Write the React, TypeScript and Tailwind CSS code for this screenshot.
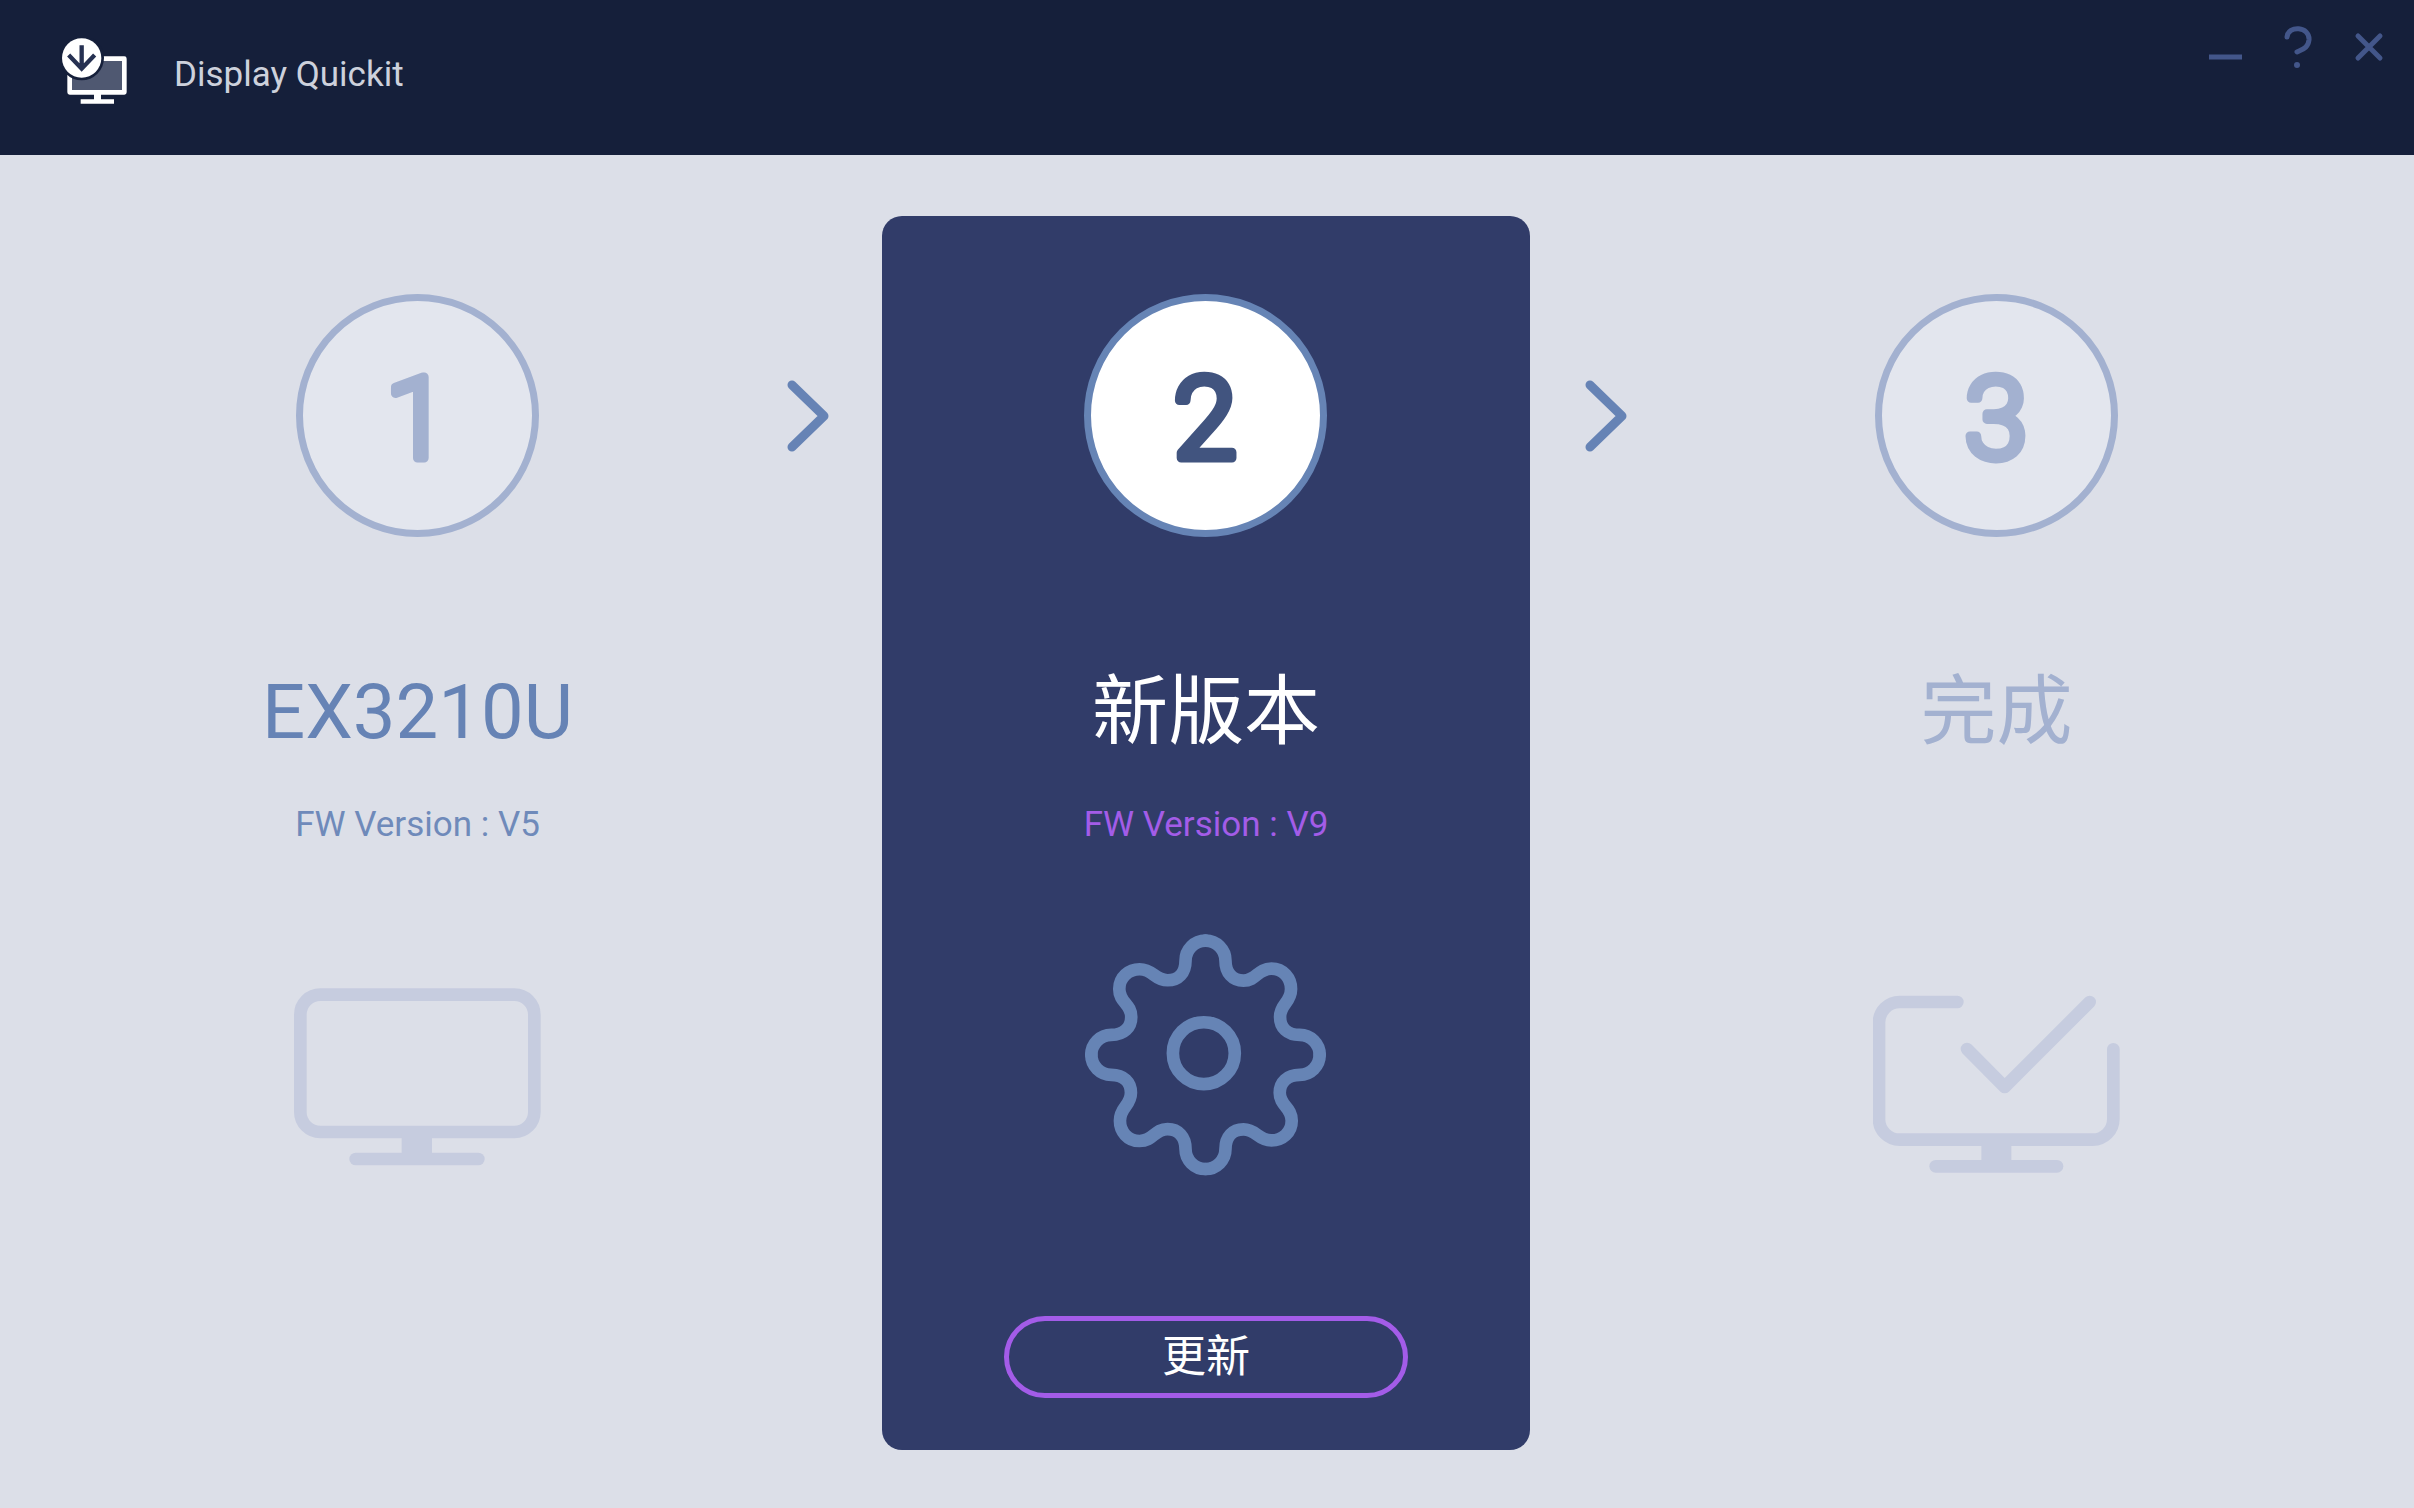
import type { ReactNode } from "react";
import clsx from "clsx";

const LogoIcon = () => (
  <svg viewBox="183 114 198 198" className="h-[66px] w-[66px]" fill="none">
    <path d="M209 176H374V276H209Z" fill="#4f5871" />
    <path d="M300 176H373V277H209V225" stroke="#fff" strokeWidth="14" strokeLinejoin="round" />
    <path d="M282 280H303V298H342V311H242V298H282Z" fill="#fff" />
    <circle cx="245" cy="174" r="67" fill="#151f3a" />
    <circle cx="245" cy="174" r="59" fill="#fff" />
    <path d="M245 136V206M206 165L245 206L284 165" stroke="#263152" strokeWidth="13" />
  </svg>
);

const ChevronIcon = () => (
  <svg viewBox="0 0 42 72" className="mt-[164px] h-[72px] w-[42px] shrink-0" fill="none">
    <path d="M5 5L37 36L5 67" stroke="#6683b5" strokeWidth="9" strokeLinecap="round" strokeLinejoin="round" />
  </svg>
);

const MonitorIcon = () => (
  <svg viewBox="163 115 741 534" className="h-[178px] w-[247px]" fill="none" stroke="#c6ccdf" strokeWidth="38">
    <rect x="182" y="135" width="702" height="412" rx="60" />
    <rect x="486" y="550" width="91" height="70" fill="#c6ccdf" stroke="none" />
    <path d="M348 628H716" strokeLinecap="round" />
  </svg>
);

const MonitorCheckIcon = () => (
  <svg
    viewBox="95 106 741 534"
    className="h-[178px] w-[247px]"
    fill="none"
    stroke="#c6ccdf"
    strokeWidth="38"
    strokeLinecap="round"
    strokeLinejoin="round"
  >
    <path d="M348 127H175A62 62 0 0 0 113 189V478A62 62 0 0 0 175 540H754A62 62 0 0 0 816 478V269" />
    <path d="M377 268L490 382L745 127" />
    <rect x="420" y="545" width="90" height="70" fill="#c6ccdf" stroke="none" />
    <path d="M283 620H647" />
  </svg>
);

const GearIcon = () => {
  const quarter =
    "M438 93A60 60 0 0 1 498 153C498 190 520 213 552 213C592 213 594 177 636 177C672 177 695 206 695 238C695 280 662 282 662 322C662 354 684 376 721 376A60 60 0 0 1 781 436";

  return (
    <svg
      viewBox="73 70 730 730"
      className="h-[243px] w-[243px]"
      fill="none"
      stroke="#6684b5"
      strokeWidth="38"
      strokeLinecap="round"
    >
      {[0, 90, 180, 270].map((angle) => (
        <path key={angle} d={quarter} transform={`rotate(${angle} 438 436)`} />
      ))}
      <circle cx="433" cy="431" r="93" />
    </svg>
  );
};

interface StepProps {
  number: number;
  title: string;
  version?: string;
  active?: boolean;
  titleClass: string;
  versionClass?: string;
  iconClass: string;
  icon: ReactNode;
}

const Step = ({ number, title, version, active, titleClass, versionClass, iconClass, icon }: StepProps) => (
  <div className="flex flex-col items-center">
    <div
      className={clsx(
        "h-[243px] w-[243px] rounded-full border-[7px]",
        active ? "border-[#6684b5] bg-white text-[#41547f]" : "border-[#a3b1d0] bg-[#e3e6ee] text-[#a3b1d0]"
      )}
    >
      {/* round joins soften the corners of the digit */}
      <svg viewBox="0 0 229 229" className="h-full w-full">
        <text
          x="114"
          y="157"
          textAnchor="middle"
          fill="currentColor"
          stroke="currentColor"
          strokeWidth="9"
          strokeLinejoin="round"
          className="text-[114px] font-light"
        >
          {number}
        </text>
      </svg>
    </div>
    <h2 className={clsx("mt-[125px] text-[76px] leading-[100px]", titleClass)}>{title}</h2>
    <p className={clsx("mt-[39px] h-12 text-[35px] leading-[48px]", versionClass)}>{version}</p>
    <div className={iconClass}>{icon}</div>
  </div>
);

const App = () => {
  return (
    <div className="flex min-h-screen flex-col bg-[#dcdfe8] font-[Roboto,'Noto_Sans_CJK_TC',sans-serif]">
      <header className="flex h-[155px] items-start justify-between bg-[#151f3a] pr-[21px] pl-[61px]">
        <div className="flex items-center gap-[47px] pt-[38px]">
          <LogoIcon />
          <h1 className="pt-2 text-[35px] text-[#cdd1dc]">Display Quickit</h1>
        </div>
        <div className="flex items-center gap-6 pt-[23px] text-[#43568a]">
          <button type="button" aria-label="Minimize" className="flex h-12 w-12 items-center justify-center">
            <svg viewBox="0 0 48 48" className="h-12 w-12" fill="none" stroke="currentColor" strokeWidth="5">
              <path d="M8 34H41" />
            </svg>
          </button>
          <button type="button" aria-label="Help" className="flex h-12 w-12 items-center justify-center">
            <svg viewBox="0 0 48 48" className="h-12 w-12" fill="none" stroke="currentColor" strokeWidth="5">
              <path d="M14 14C15 2 37 3 36 17C35 25 30 26 24 29" strokeLinecap="round" />
              <circle cx="24" cy="42" r="3" fill="currentColor" stroke="none" />
            </svg>
          </button>
          <button type="button" aria-label="Close" className="flex h-12 w-12 items-center justify-center">
            <svg viewBox="0 0 48 48" className="h-12 w-12" fill="none" stroke="currentColor" strokeWidth="5">
              <path d="M13 13L35 35M35 13L13 35" strokeLinecap="round" />
            </svg>
          </button>
        </div>
      </header>

      <main className="flex flex-1 items-start px-12 pt-[61px] pb-[58px]">
        <section className="flex-1 pt-[78px]">
          <Step
            number={1}
            title="EX3210U"
            version="FW Version : V5"
            titleClass="text-[#6683b5]"
            versionClass="text-[#6f8aba]"
            iconClass="mt-[139px]"
            icon={<MonitorIcon />}
          />
        </section>

        <ChevronIcon />

        <section className="mr-[55px] ml-[53px] flex w-[648px] flex-col items-center rounded-[20px] bg-[#313c69] pt-[78px] pb-[52px]">
          <Step
            number={2}
            title="新版本"
            version="FW Version : V9"
            active
            titleClass="text-white"
            versionClass="text-[#a35ce8]"
            iconClass="mt-[84px]"
            icon={<GearIcon />}
          />
          <button
            type="button"
            className="mt-[140px] h-[82px] w-[404px] rounded-full border-[5px] border-[#a35ce8] text-[44px] leading-none text-white"
          >
            更新
          </button>
        </section>

        <ChevronIcon />

        <section className="flex-1 pt-[78px]">
          <Step
            number={3}
            title="完成"
            titleClass="text-[#a3b1d0]"
            iconClass="mt-[146px]"
            icon={<MonitorCheckIcon />}
          />
        </section>
      </main>
    </div>
  );
};

export default App;
